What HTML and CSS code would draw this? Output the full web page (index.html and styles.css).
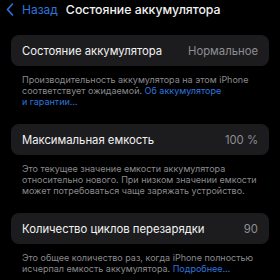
FILE: index.html
```html
<!DOCTYPE html>
<html lang="ru">
<head>
<meta charset="utf-8">
<link rel="stylesheet" href="styles.css">
</head>
<body>
<div class="page">
  <header class="nav">
    <span class="back">
      <svg class="chev" width="8" height="13" viewBox="0 0 8 13"><path d="M6.5 1 L1.5 6.5 L6.5 12" fill="none" stroke="#2f74dd" stroke-width="1.6" stroke-linecap="round" stroke-linejoin="round"/></svg>
      <span class="back-label">Назад</span>
    </span>
    <span class="title">Состояние аккумулятора</span>
  </header>

  <section class="group g1">
    <div class="card"><span class="label">Состояние аккумулятора</span><span class="value">Нормальное</span></div>
    <p class="note">Производительность аккумулятора на этом iPhone соответствует ожидаемой. <span class="link">Об аккумуляторе и&nbsp;гарантии…</span></p>
  </section>

  <section class="group">
    <div class="card"><span class="label">Максимальная емкость</span><span class="value">100 %</span></div>
    <p class="note">Это текущее значение емкости аккумулятора относительно нового. При низком значении емкости может потребоваться чаще заряжать устройство.</p>
  </section>

  <section class="group">
    <div class="card"><span class="label">Количество циклов перезарядки</span><span class="value">90</span></div>
    <p class="note">Это общее количество раз, когда iPhone полностью исчерпал емкость аккумулятора. <span class="link">Подробнее…</span></p>
  </section>
</div>
</body>
</html>
```

FILE: styles.css
```css
html, body {
  margin: 0;
  padding: 0;
  background: #000;
}
.page {
  width: 280px;
  height: 280px;
  overflow: hidden;
  font-family: Inter, "Noto Sans", sans-serif;
  color: #fff;
}
.nav {
  display: flex;
  align-items: center;
  height: 16px;
  padding: 1px 0 0 6px;
}
.back {
  display: flex;
  align-items: center;
  gap: 8px;
  color: #2f74dd;
  font-size: 12px;
}
.title {
  margin-left: 8px;
  font-size: 12.3px;
  font-weight: 500;
  color: #f2f2f2;
}
.group {
  margin: 0 11px;
}
.g1 {
  margin-top: 18px;
}
.card {
  display: flex;
  justify-content: space-between;
  align-items: center;
  height: 31px;
  padding: 0 11px;
  background: #1c1c1e;
  border-radius: 8px;
  font-size: 11.3px;
}
.label {
  color: #f2f2f2;
}
.value {
  color: #8e8e93;
}
.note {
  margin: 8px 11px 17px;
  font-size: 9px;
  line-height: 11px;
  color: #8a8a8e;
}
.link {
  color: #2f74dd;
}
```
